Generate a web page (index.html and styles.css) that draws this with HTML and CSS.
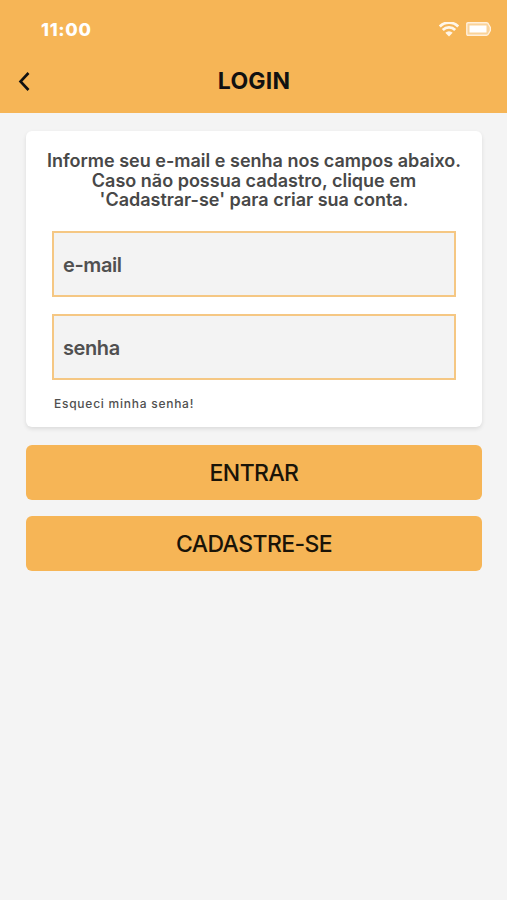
FILE: index.html
```html
<!DOCTYPE html>
<html lang="pt-br">
<head>
    <meta charset="UTF-8">
    <meta name="viewport" content="width=device-width, initial-scale=1.0">
    <title>Login</title>
    <link rel="stylesheet" href="styles.css">
</head>
<body>
    <header>
        <div class="status-bar">
            <span class="time">11:00</span>
            <div class="status-icons">
                <svg width="20" height="15" viewBox="0 0 20 15" fill="none" stroke="#fff6e8" stroke-width="2.8">
                    <path d="M.8 4.500a13 13 0 0 1 18.400 0"/>
                    <path d="M3.800 7.900a8.800 8.800 0 0 1 12.400 0"/>
                    <path d="M6.300 10.800a5.200 5.200 0 0 1 7.400 0L10 14.500z" fill="#fff6e8" stroke="none"/>
                </svg>
                <svg width="25" height="14" viewBox="0 0 25 14">
                    <path d="M2 .8h18.500q1.500 0 2.200 1.700l1.700 3v3l-1.700 3q-.7 1.700-2.200 1.700H2Q.8 13.200.8 12V2Q.8.8 2 .8z" fill="#fad399" stroke="#fff0dc" stroke-width="1.400"/>
                    <rect x="3.500" y="3.500" width="17" height="7" fill="#fff"/>
                </svg>
            </div>
        </div>
        <div class="title-bar">
            <a href="#" class="back" aria-label="Voltar">
                <svg width="12" height="20" viewBox="0 0 12 20" fill="none" stroke="#111" stroke-width="2.6">
                    <path d="M10.500 2L2.500 10.500l8 8.500"/>
                </svg>
            </a>
            <h1>LOGIN</h1>
        </div>
    </header>

    <main class="container">
        <form id="loginForm">
            <div class="card">
                <p>Informe seu e-mail e senha nos campos abaixo. Caso não possua cadastro, clique em<br>'Cadastrar-se' para criar sua conta.</p>
                <input type="email" id="email" placeholder="e-mail">
                <input type="password" id="senha" placeholder="senha">
                <a href="#" class="forgot">Esqueci minha senha!</a>
            </div>
            <button type="submit">ENTRAR</button>
            <button type="button">CADASTRE-SE</button>
        </form>
    </main>
</body>
</html>
```
FILE: styles.css
```css
* {
    box-sizing: border-box;
}
body {
    margin: 0;
    min-height: 100vh;
    font-family: Inter, "Liberation Sans", sans-serif;
    background-color: #f4f4f4;
    color: #484848;
}
header {
    height: 113px;
    padding-top: 14px;
    background-color: #f6b556;
}
.status-bar {
    display: flex;
    justify-content: space-between;
    align-items: center;
    height: 30px;
    padding: 0 16px 0 41px;
}
.time {
    color: #fff;
    font-size: 18px;
    font-weight: 800;
    letter-spacing: 0.7px;
}
.status-icons {
    display: flex;
    align-items: center;
    gap: 7px;
}
.status-icons svg {
    display: block;
}
.title-bar {
    display: grid;
    grid-template-columns: 41px 1fr 40px;
    align-items: center;
    height: 74px;
}
.back {
    padding-left: 18px;
}
.back svg {
    display: block;
}
h1 {
    margin: 0;
    color: #111;
    font-size: 23px;
    font-weight: 700;
    letter-spacing: 0.2px;
    text-align: center;
}
.container {
    padding: 18px 25px 0 26px;
}
.card {
    height: 296px;
    padding: 20px 18px 0;
    margin-bottom: 18px;
    background-color: #fff;
    border-radius: 6px;
    box-shadow: 0 2px 4px rgba(0, 0, 0, 0.1);
}
.card p {
    margin: 0 0 21px;
    font-size: 18px;
    font-weight: 600;
    line-height: 19.7px;
    text-align: center;
}
input {
    display: block;
    width: 404px;
    height: 66px;
    margin: 0 8px 17px;
    padding: 2px 9px 0;
    border: 2px solid #f5c783;
    background-color: #f3f3f3;
    font-family: inherit;
    font-size: 20px;
    font-weight: 600;
    letter-spacing: -0.4px;
}
input::placeholder {
    color: #505050;
    opacity: 1;
}
.forgot {
    display: block;
    margin: -1px 0 0 10px;
    color: #505050;
    font-size: 12px;
    font-weight: 500;
    letter-spacing: 0.75px;
    line-height: 16px;
    text-decoration: none;
}
button {
    display: block;
    width: 100%;
    height: 54.5px;
    margin-bottom: 16.5px;
    padding: 1px 0 0;
    border: none;
    border-radius: 6px;
    background-color: #f6b556;
    color: #1a1408;
    font-family: inherit;
    font-size: 23px;
    font-weight: 500;
    letter-spacing: -0.6px;
    cursor: pointer;
}
```
